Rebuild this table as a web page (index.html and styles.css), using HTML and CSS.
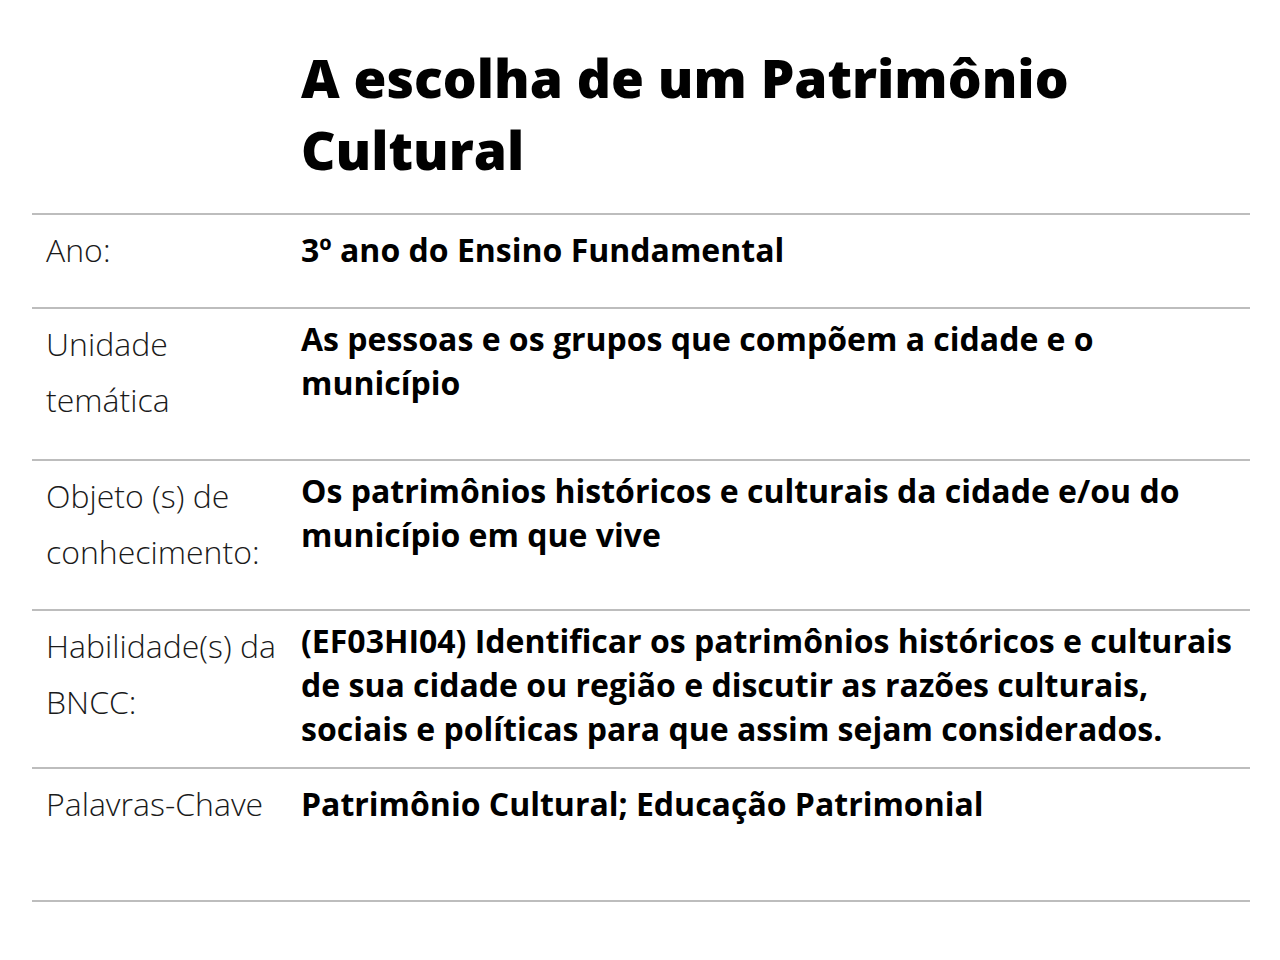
FILE: index.html
```html
<!DOCTYPE html>
<html lang="pt-BR">
<head>
<meta charset="utf-8">
<title>A escolha de um Patrimônio Cultural</title>
<link rel="stylesheet" href="styles.css">
</head>
<body>
<main class="page">
  <h1 class="title">A escolha de um Patrimônio Cultural</h1>
  <section class="sheet">
    <div class="row">
      <div class="label">Ano:</div>
      <div class="value value-single">3º ano do Ensino Fundamental</div>
    </div>
    <div class="row row-mid">
      <div class="label">Unidade temática</div>
      <div class="value">As pessoas e os grupos que compõem a cidade e o município</div>
    </div>
    <div class="row">
      <div class="label">Objeto (s) de conhecimento:</div>
      <div class="value">Os patrimônios históricos e culturais da cidade e/ou do município em que vive</div>
    </div>
    <div class="row">
      <div class="label">Habilidade(s) da BNCC:</div>
      <div class="value">(EF03HI04) Identificar os patrimônios históricos e culturais de sua cidade ou região e discutir as razões culturais, sociais e políticas para que assim sejam considerados.</div>
    </div>
    <div class="row row-last">
      <div class="label">Palavras-Chave</div>
      <div class="value value-single">Patrimônio Cultural; Educação Patrimonial</div>
    </div>
  </section>
</main>
</body>
</html>
```

FILE: styles.css
```css
html, body {
  margin: 0;
  padding: 0;
  background: #ffffff;
}

body {
  font-family: "Open Sans", "Liberation Sans", sans-serif;
  color: #000;
}

.page {
  width: 1218px;
  margin: 0 0 0 32px;
  padding-top: 42px;
}

.title {
  margin: 0 0 27px 269px;
  font-size: 53.3px;
  line-height: 72px;
  font-weight: 800;
  color: #000;
}

.sheet {
  border-bottom: 2px solid #bdbdbd;
}

.row {
  display: grid;
  grid-template-columns: 256px 1fr;
  align-items: start;
  border-top: 2px solid #bdbdbd;
  padding-top: 7px;
}

.label {
  padding: 0 0 29px 14px;
  font-size: 32px;
  line-height: 56px;
  font-weight: 300;
  color: #1a1a1a;
}

.value {
  padding: 1px 10px 16px 13px;
  font-size: 32px;
  line-height: 44px;
  font-weight: 700;
  color: #000;
}

.value-single {
  padding-top: 0;
  line-height: 56px;
}

.row-mid {
  padding-bottom: 2px;
}

.row-last {
  min-height: 124px;
}
```
